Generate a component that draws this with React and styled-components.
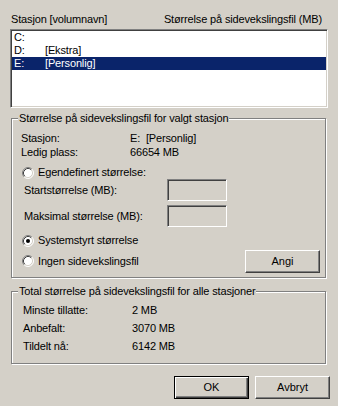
import React from 'react';
import styled, { createGlobalStyle, css } from 'styled-components';

const FACE = '#D4D0C8';
const SHADOW = '#808080';
const DARK = '#404040';
const HI = '#FFFFFF';
const SEL = '#0A246A';

const Global = createGlobalStyle`
  html, body { margin: 0; padding: 0; background: ${FACE}; }
  body { font-family: "Liberation Sans", Arial, sans-serif; font-size: 11px; letter-spacing: -0.15px; color: #000; }
  #root { width: 338px; height: 406px; overflow: hidden; }
`;

const Dialog = styled.div`
  width: 338px;
  height: 406px;
  box-sizing: border-box;
  padding: 13px 10px 0 10px;
  display: flex;
  flex-direction: column;
  background: ${FACE};
  line-height: 13px;
`;

const HeaderRow = styled.div`
  display: flex;
  justify-content: space-between;
  height: 13px;
  padding: 0 6px 0 1px;
  margin-bottom: 3px;
`;

const ListBox = styled.div`
  height: 79px;
  box-sizing: border-box;
  background: ${HI};
  border: 1px solid;
  border-color: ${SHADOW} ${HI} ${HI} ${SHADOW};
  box-shadow: inset 1px 1px 0 ${DARK}, inset -1px -1px 0 ${FACE};
  padding: 1px;
`;

const ListRow = styled.div`
  display: grid;
  grid-template-columns: 31px 1fr;
  height: 13px;
  padding-left: 2px;
  background: ${(p) => (p.$selected ? SEL : 'transparent')};
  color: ${(p) => (p.$selected ? HI : '#000')};
`;

const Group = styled.div`
  margin: ${(p) => p.$mt}px 2px 0 1px;
  border: 1px solid ${SHADOW};
  box-shadow: 1px 1px 0 ${HI}, inset 1px 1px 0 ${HI};
  padding: 0 5px ${(p) => p.$pb}px 9px;
  display: flex;
  flex-direction: column;
`;

const Legend = styled.div`
  align-self: flex-start;
  margin: -7px 0 0 -3px;
  padding: 0 1px;
  background: ${FACE};
  height: 13px;
`;

const InfoGrid = styled.div`
  display: grid;
  grid-template-columns: ${(p) => p.$col}px 1fr;
  grid-auto-rows: ${(p) => p.$row}px;
  row-gap: ${(p) => p.$gap}px;
  align-items: center;
  margin: ${(p) => p.$mt}px 0 0 ${(p) => p.$ml}px;
`;

const RadioRow = styled.label`
  display: flex;
  align-items: center;
  gap: 4px;
  height: 13px;
  margin: ${(p) => p.$mt}px 0 0 1px;
`;

const FieldRow = styled.div`
  display: grid;
  grid-template-columns: 143px 60px;
  align-items: center;
  margin: ${(p) => p.$mt}px 0 0 3px;
`;

const Edit = styled.input`
  appearance: none;
  width: 60px;
  height: 22px;
  box-sizing: border-box;
  margin: 0;
  padding: 0;
  border: 1px solid;
  border-color: ${SHADOW} ${HI} ${HI} ${SHADOW};
  box-shadow: inset 1px 1px 0 ${DARK}, inset -1px -1px 0 ${FACE};
  background: ${FACE};
  font: inherit;
`;

const BottomRow = styled.div`
  display: flex;
  justify-content: space-between;
  align-items: center;
  height: 24px;
  margin-top: 2px;
`;

const Button = styled.button`
  width: 75px;
  height: 23px;
  box-sizing: border-box;
  margin: 0;
  padding: 0;
  font: inherit;
  line-height: 13px;
  color: #000;
  background: ${FACE};
  border: 1px solid;
  border-color: ${HI} ${DARK} ${DARK} ${HI};
  box-shadow: inset -1px -1px 0 ${SHADOW};
  ${(p) =>
    p.$default &&
    css`
      border-color: #000;
      box-shadow: inset 1px 1px 0 ${HI}, inset -1px -1px 0 ${DARK}, inset -2px -2px 0 ${SHADOW};
    `}
`;

const ButtonBar = styled.div`
  display: flex;
  justify-content: flex-end;
  gap: 6px;
  margin: 12px -2px 0 0;
`;

function Radio({ checked }) {
  return (
    <svg width="12" height="12" viewBox="0 0 12 12" style={{ flex: 'none' }}>
      <circle cx="6" cy="6" r="5" fill={HI} />
      <path d="M2.11 9.89 A5.5 5.5 0 0 1 9.89 2.11" stroke={SHADOW} strokeWidth="1" fill="none" />
      <path d="M9.89 2.11 A5.5 5.5 0 0 1 2.11 9.89" stroke={HI} strokeWidth="1" fill="none" />
      <path d="M2.82 9.18 A4.5 4.5 0 0 1 9.18 2.82" stroke={DARK} strokeWidth="1" fill="none" />
      <path d="M9.18 2.82 A4.5 4.5 0 0 1 2.82 9.18" stroke={FACE} strokeWidth="1" fill="none" />
      {checked && <circle cx="6" cy="6" r="2" fill="#000" />}
    </svg>
  );
}

const drives = [
  { d: 'C:', n: '' },
  { d: 'D:', n: '[Ekstra]' },
  { d: 'E:', n: '[Personlig]', sel: true },
];

export default function App() {
  return (
    <>
      <Global />
      <Dialog>
        <HeaderRow>
          <span>Stasjon [volumnavn]</span>
          <span>Størrelse på sidevekslingsfil (MB)</span>
        </HeaderRow>
        <ListBox>
          {drives.map((r) => (
            <ListRow key={r.d} $selected={r.sel}>
              <span>{r.d}</span>
              <span>{r.n}</span>
            </ListRow>
          ))}
        </ListBox>

        <Group $mt={10} $pb={4}>
          <Legend>Størrelse på sidevekslingsfil for valgt stasjon</Legend>
          <InfoGrid $col={109} $row={14} $gap={0} $mt={6} $ml={0}>
            <span>Stasjon:</span>
            <span>E:&nbsp;&nbsp;[Personlig]</span>
            <span>Ledig plass:</span>
            <span>66654 MB</span>
          </InfoGrid>
          <RadioRow $mt={7}>
            <Radio />
            <span>Egendefinert størrelse:</span>
          </RadioRow>
          <FieldRow $mt={0}>
            <span>Startstørrelse (MB):</span>
            <Edit disabled />
          </FieldRow>
          <FieldRow $mt={4}>
            <span>Maksimal størrelse (MB):</span>
            <Edit disabled />
          </FieldRow>
          <RadioRow $mt={7}>
            <Radio checked />
            <span>Systemstyrt størrelse</span>
          </RadioRow>
          <BottomRow>
            <RadioRow $mt={0}>
              <Radio />
              <span>Ingen sidevekslingsfil</span>
            </RadioRow>
            <Button>Angi</Button>
          </BottomRow>
        </Group>

        <Group $mt={13} $pb={10}>
          <Legend>Total størrelse på sidevekslingsfil for alle stasjoner</Legend>
          <InfoGrid $col={109} $row={13} $gap={5} $mt={6} $ml={2}>
            <span>Minste tillatte:</span>
            <span>2 MB</span>
            <span>Anbefalt:</span>
            <span>3070 MB</span>
            <span>Tildelt nå:</span>
            <span>6142 MB</span>
          </InfoGrid>
        </Group>

        <ButtonBar>
          <Button $default>OK</Button>
          <Button>Avbryt</Button>
        </ButtonBar>
      </Dialog>
    </>
  );
}
